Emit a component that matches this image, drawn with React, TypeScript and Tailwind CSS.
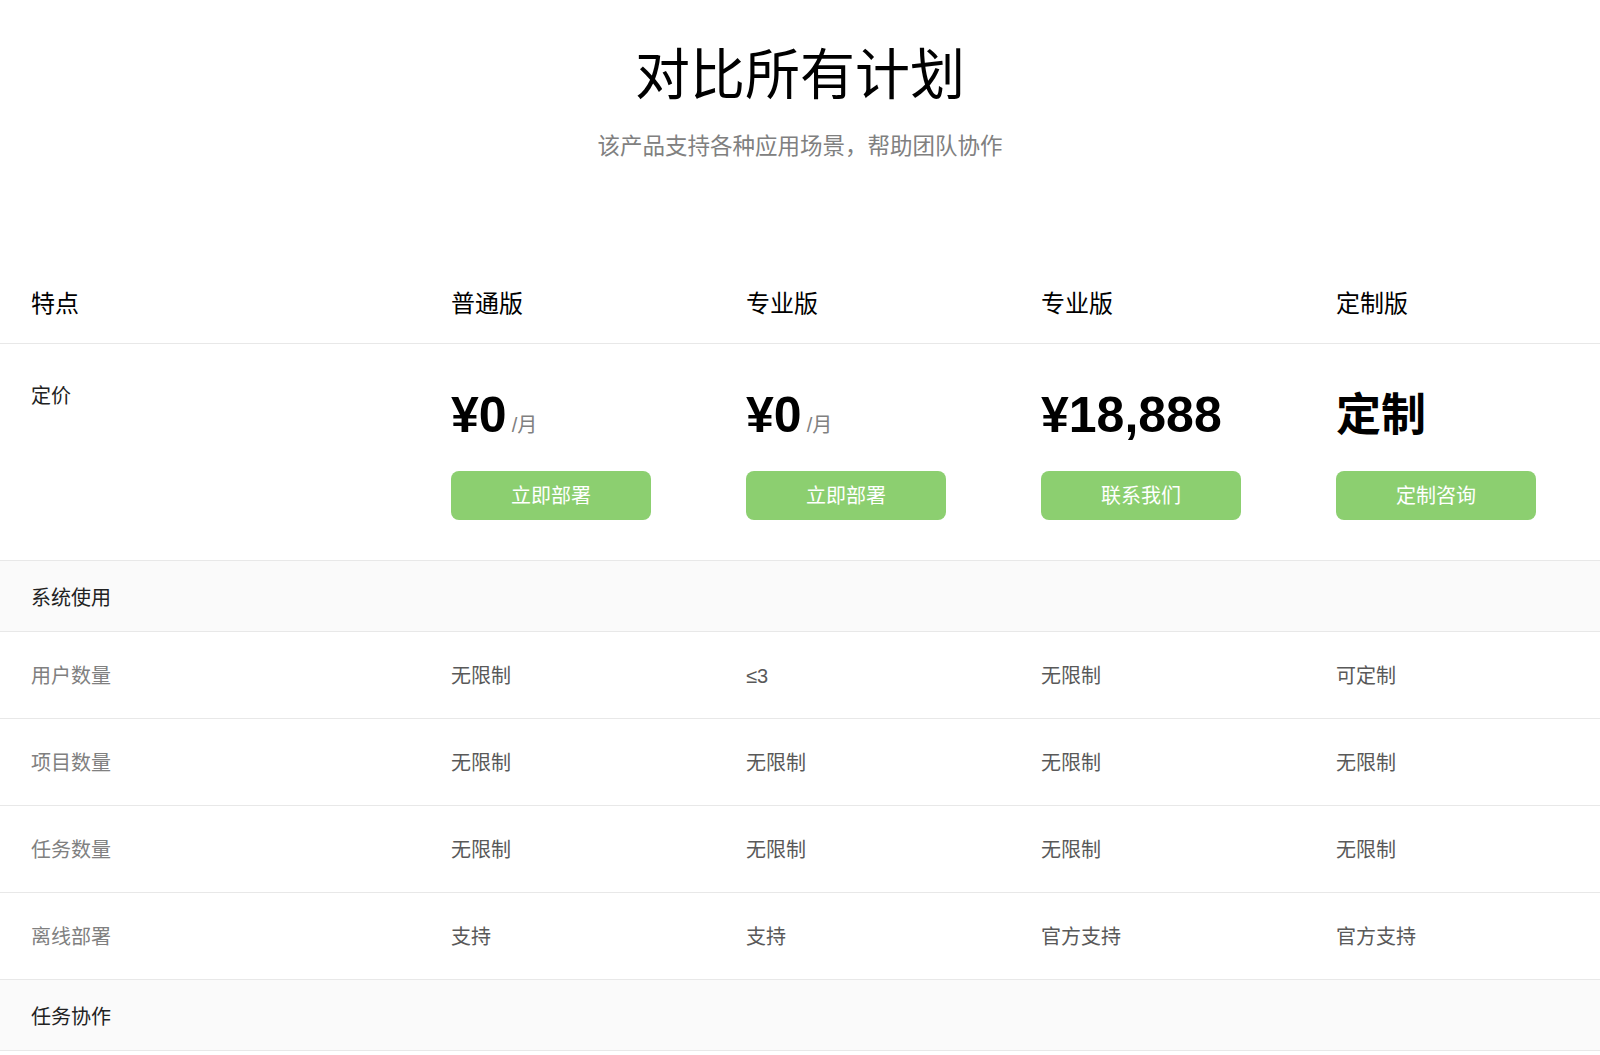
import React from "react";

type Plan = {
  name: string;
  price: string;
  unit?: string;
  action: string;
};

const plans: Plan[] = [
  { name: "普通版", price: "¥0", unit: "/月", action: "立即部署" },
  { name: "专业版", price: "¥0", unit: "/月", action: "立即部署" },
  { name: "专业版", price: "¥18,888", action: "联系我们" },
  { name: "定制版", price: "定制", action: "定制咨询" },
];

type Section = {
  title: string;
  rows: { label: string; values: string[] }[];
};

const sections: Section[] = [
  {
    title: "系统使用",
    rows: [
      { label: "用户数量", values: ["无限制", "≤3", "无限制", "可定制"] },
      { label: "项目数量", values: ["无限制", "无限制", "无限制", "无限制"] },
      { label: "任务数量", values: ["无限制", "无限制", "无限制", "无限制"] },
      { label: "离线部署", values: ["支持", "支持", "官方支持", "官方支持"] },
    ],
  },
  {
    title: "任务协作",
    rows: [],
  },
];

const grid = "grid grid-cols-[420px_repeat(4,1fr)]";

const App: React.FC = () => {
  return (
    <div className="min-h-screen bg-white font-['Liberation_Sans','Noto_Sans_CJK_SC',sans-serif]">
      {/* Heading */}
      <div className="pt-[40px] text-center">
        <h1 className="text-[55px] leading-[70px] font-normal text-black">对比所有计划</h1>
        <p className="mt-[21px] text-[22.5px] leading-[32px] text-[#808080]">
          该产品支持各种应用场景，帮助团队协作
        </p>
      </div>

      {/* Comparison table */}
      <div className="mt-[100px]">
        {/* Header row */}
        <div className={`${grid} h-[81px] pt-[2px] border-b border-[#e8e8e8] items-center text-[24px] text-black`}>
          <div className="pl-[31px]">特点</div>
          {plans.map((plan, i) => (
            <div key={i} className="pl-[31px]">
              {plan.name}
            </div>
          ))}
        </div>

        {/* Pricing row */}
        <div className={`${grid} border-b border-[#e8e8e8]`}>
          <div className="pl-[31px] pt-[38px] text-[20px] leading-[28px] text-[#222]">定价</div>
          {plans.map((plan, i) => (
            <div key={i} className="pl-[31px] pt-[40px] pb-[40px]">
              {plan.price.startsWith("¥") ? (
                <div className="flex items-baseline h-[62px]">
                  <span className="text-[50px] leading-[62px] font-bold text-black">{plan.price}</span>
                  {plan.unit && (
                    <span className="ml-[5px] text-[20px] leading-none text-[#808080]">{plan.unit}</span>
                  )}
                </div>
              ) : (
                <div className="h-[62px]">
                  <div className="text-[45px] leading-[64px] font-bold text-black">{plan.price}</div>
                </div>
              )}
              <button className="mt-[25px] flex h-[49px] w-[200px] items-center justify-center rounded-[8px] bg-[#8ccf70] text-[20px] text-white">
                {plan.action}
              </button>
            </div>
          ))}
        </div>

        {/* Feature sections */}
        {sections.map((section) => (
          <React.Fragment key={section.title}>
            <div className="flex h-[71px] items-center border-b border-[#e8e8e8] bg-[#fafafa] pl-[31px] pt-[3px] text-[20px] text-[#222]">
              {section.title}
            </div>
            {section.rows.map((row) => (
              <div key={row.label} className={`${grid} h-[87px] items-center border-b border-[#e8e8e8] pt-[2px] text-[20px]`}>
                <div className="pl-[31px] text-[#808080]">{row.label}</div>
                {row.values.map((value, i) => (
                  <div key={i} className="pl-[31px] text-[#595959]">
                    {value}
                  </div>
                ))}
              </div>
            ))}
          </React.Fragment>
        ))}
      </div>
    </div>
  );
};

export default App;
